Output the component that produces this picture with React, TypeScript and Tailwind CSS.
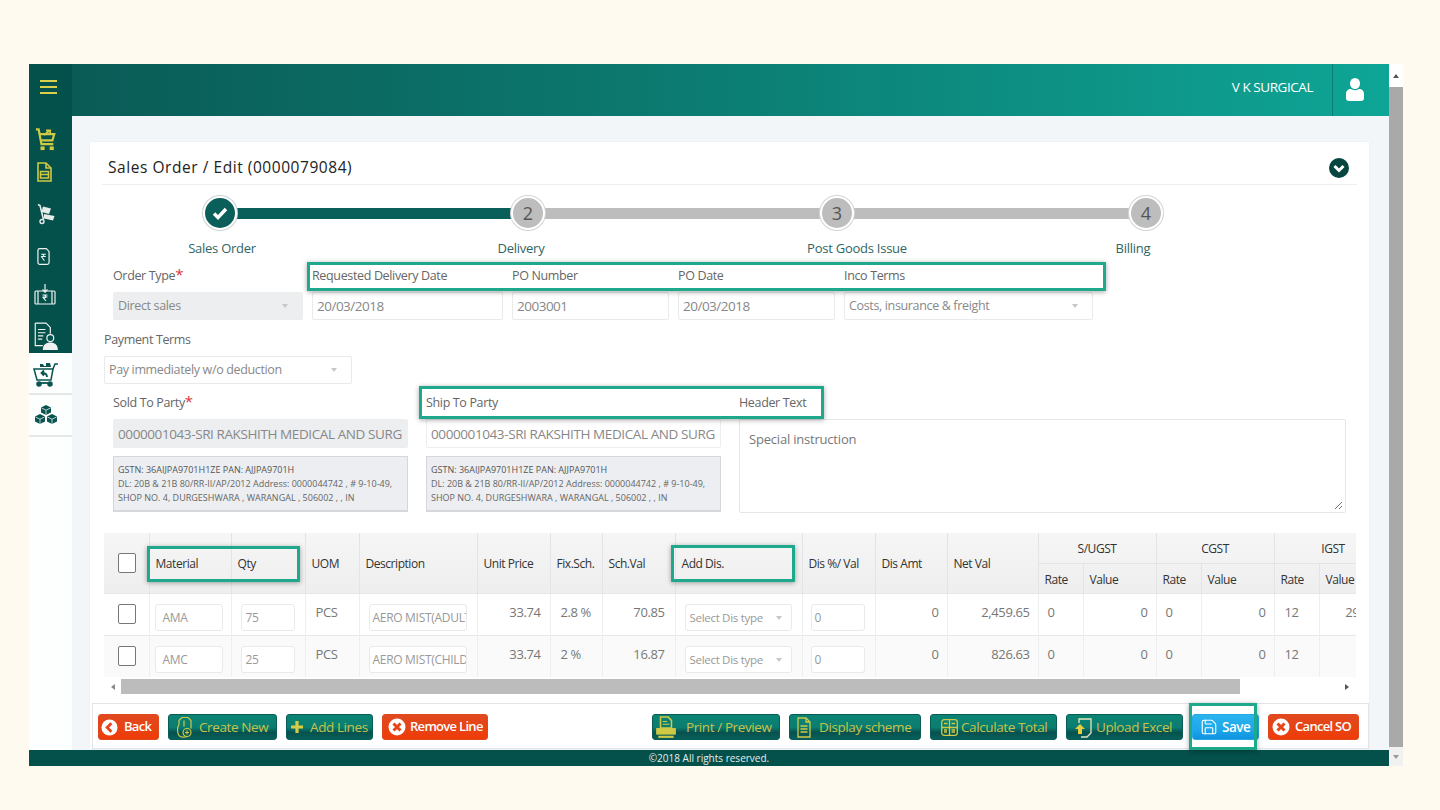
import { Save } from "lucide-react";
import type { ReactNode } from "react";

const YELLOW = "#cfc944";
const DARK = "#0a544f";

function Caret({ className = "" }: { className?: string }) {
  return <span className={`ml-auto h-0 w-0 border-x-[3px] border-t-[4px] border-x-transparent border-t-[#c4c8cc] ${className}`} />;
}

function Star() {
  return <span className="text-[#e0323c] text-[15px] leading-none">*</span>;
}

function Highlight({ className }: { className: string }) {
  return <div className={`absolute z-10 border-[3px] border-[#1fa98c] shadow-[0_1px_5px_rgba(0,0,0,0.35)] pointer-events-none ${className}`} />;
}

function Field({ label, value, width, disabled, select }: { label: ReactNode; value: string; width: string; disabled?: boolean; select?: boolean }) {
  return (
    <div className={`flex flex-col ${width}`}>
      <div className="h-5 pt-px leading-5 text-[12.5px] tracking-[-0.35px] text-[#666]">{label}</div>
      <div className={`mt-[7px] h-7 flex items-center rounded-[2px] border pl-[4px] pr-[5px] text-[#888] ${select ? "text-[12.5px] tracking-[-0.35px]" : "text-[13.5px] tracking-[-0.5px]"} ${disabled ? "bg-[#eceef0] border-[#eceef0]" : "bg-white border-[#e8eaec]"}`}>
        <span className="whitespace-nowrap">{value}</span>
        {select && <Caret className="mr-[9px]" />}
      </div>
    </div>
  );
}

function Address() {
  return (
    <div className="mt-[8px] h-14 w-[295px] bg-[#eceef1] border border-[#d5d7da] border-b-2 px-[4px] pt-[6px] text-[9px] leading-[14px] text-[#666] whitespace-nowrap">
      <div className="text-[#555] font-medium">GSTN: 36AIJPA9701H1ZE PAN: AJJPA9701H</div>
      <div>DL: 20B &amp; 21B 80/RR-II/AP/2012 Address: 0000044742 , # 9-10-49,</div>
      <div>SHOP NO. 4, DURGESHWARA , WARANGAL , 506002 , , IN</div>
    </div>
  );
}

function Step({ n, done }: { n: number; done?: boolean }) {
  return (
    <div className={`z-[1] h-[34px] w-[34px] shrink-0 rounded-full border-2 border-white ring-1 flex items-center justify-center text-[18px] text-[#555] ${done ? "bg-[#0a5f5a] ring-[#c8d4d4]" : "bg-[#bdbdbd] ring-[#d4d4d4]"}`}>
      {done ? (
        <svg width="16" height="14" viewBox="0 0 16 14"><path d="M2 7.5 6 11.5 14 3" fill="none" stroke="#fff" strokeWidth="3.4" /></svg>
      ) : n}
    </div>
  );
}

function Btn({ children, w, kind, icon, place }: { children: string; w: string; kind: "green" | "red" | "blue"; icon?: ReactNode; place: string }) {
  const look = {
    green: "bg-[linear-gradient(#0b8474,#0b7d70_52%,#07514e_72%,#07605b)] text-[#c7c24a] border-[#0a5a55] font-medium text-[13.5px] tracking-[-0.4px]",
    red: "bg-[linear-gradient(#e0491f,#e84212_60%,#ee3c08)] text-white border-[#e0491f] font-semibold text-[13px] tracking-[-0.7px]",
    blue: "bg-[linear-gradient(#2cb4ee,#1da7ea_60%,#0f93e0)] text-white border-[#23a9ea] font-semibold text-[13.5px] tracking-[-0.5px]",
  }[kind];
  return (
    <div className={`h-[26px] ${w} ${place} shrink-0 flex items-center rounded-[3px] border whitespace-nowrap ${look}`}>
      {icon}
      <span>{children}</span>
    </div>
  );
}

function Back() {
  return (
    <svg width="17" height="17" viewBox="0 0 18 18"><circle cx="9" cy="9" r="8.5" fill="#fff" /><path d="M11 4.5 6.5 9l4.5 4.5" fill="none" stroke="#e8441a" strokeWidth="3" /></svg>
  );
}
function Cancel() {
  return (
    <svg width="18" height="18" viewBox="0 0 18 18"><circle cx="9" cy="9" r="8.5" fill="#fff" /><path d="M5.5 5.5l7 7m0-7-7 7" stroke="#e8441a" strokeWidth="3" /></svg>
  );
}
function CreateIcon() {
  return (
    <svg width="17" height="23" viewBox="0 0 17 22" fill="none" stroke={YELLOW} strokeWidth="1.2"><path d="M6 1h6l3 3v8M6 1 3 4v4M3 8c-2 3-2 8 0 11 1 2 6 2 8 1" /><circle cx="11" cy="16" r="4" /><path d="M11 14v4M9 16h4M8 4v6" /></svg>
  );
}
function PlusIcon() {
  return (
    <svg width="12" height="12" viewBox="0 0 12 12"><path d="M6 0v12M0 6h12" stroke="#d6cc45" strokeWidth="3.2" /></svg>
  );
}
function PrintIcon() {
  return (
    <svg width="22" height="23" viewBox="0 0 20 21"><path d="M5 1h7l3 3v7H5z" fill="none" stroke={YELLOW} strokeWidth="1.4" /><path d="M7 5h4M7 7.5h6" stroke={YELLOW} /><path d="M1 11h18v6H1z" fill={YELLOW} /><path d="M3 18h14v2H3z" fill={YELLOW} /></svg>
  );
}
function DocIcon() {
  return (
    <svg width="14" height="21" viewBox="0 0 14 21" fill="none" stroke={YELLOW} strokeWidth="1.3"><path d="M1 1h8l4 4v15H1z" /><path d="M9 1v4h4" /><path d="M3.5 9h7M3.5 12h7M3.5 15h7" strokeWidth="1.6" /></svg>
  );
}
function CalcIcon() {
  return (
    <svg width="17" height="17" viewBox="0 0 17 17" fill="none" stroke={YELLOW} strokeWidth="1.3"><rect x="0.7" y="0.7" width="15.6" height="15.6" rx="2.5" /><path d="M8.5 1v15M1 8.5h15" /><path d="M3 4.5h3.5M10.5 4.5h3.500M3 11h3M3 13h3M10.500 11h3.500M10.500 13h3.500" /></svg>
  );
}
function UploadIcon() {
  return (
    <svg width="18" height="21" viewBox="0 0 18 21"><path d="M5 6V2h12v14l-4 4H7" fill="none" stroke="#e8e6c0" strokeWidth="1.3" /><path d="M6 7l5 5H8v5H4v-5H1z" fill="#e6cf3e" /></svg>
  );
}

function CartIcon() {
  return (
    <svg width="22" height="24" viewBox="0 0 24 25" fill="none" stroke={YELLOW} strokeWidth="2.4"><path d="M1 1h3l3 16h13" /><path d="M5 6h16l-2 7H7" /><path d="M10 7 16 2m-4 0h4.500v4" strokeWidth="2" /><rect x="6" y="19.500" width="4.500" height="4" fill={YELLOW} stroke="none" /><rect x="16" y="19.500" width="4.500" height="4" fill={YELLOW} stroke="none" /></svg>
  );
}
function NoteIcon() {
  return (
    <svg width="15" height="20" viewBox="0 0 15 20" fill="none" stroke={YELLOW} strokeWidth="1.6"><path d="M1 1h8l5 5v13H1z" /><path d="M9 1v5h5" /><path d="M3.500 9.500h8v6.500h-8zM3.500 12.500h8" /></svg>
  );
}
function TruckIcon() {
  return (
    <svg width="18" height="22" viewBox="0 0 18 21" fill="none"><path d="M1 1l2 1L6.500 16" stroke="#e6ecea" strokeWidth="1.600" /><circle cx="5" cy="18" r="2" stroke="#e6ecea" strokeWidth="1.400" /><path d="M6 3l8 2-2 5.500-7.500-2z" fill="#e6ecea" /><path d="M7 10.500l10.500 2-1.500 4.500-9-2z" fill="#e6ecea" /></svg>
  );
}
function RupeeDoc() {
  return (
    <svg width="13" height="19" viewBox="0 0 14 19" fill="none" stroke="#eef3f2" strokeWidth="1.300"><path d="M3 1h7l3 3v12a2 2 0 0 1-2 2H3a2 2 0 0 1-2-2V3a2 2 0 0 1 2-2z" /><path d="M4.500 7h5M4.500 9.500h5M5 7c3 0 3 3 0 3l3 4" strokeWidth="1.100" /></svg>
  );
}
function RupeeNote() {
  return (
    <svg width="22" height="21" viewBox="0 0 22 21" fill="none" stroke="#eef3f2" strokeWidth="1.200"><rect x="1" y="7" width="20" height="13" rx="1" /><path d="M11 0v9M8.500 5.500 11 8l2.500-2.500" /><path d="M4 7v13M18 7v13" /><path d="M8.500 11h5M8.500 13h5M9.500 11c3 0 3 3 0 3l2.500 3" strokeWidth="1.100" /></svg>
  );
}
function ReportIcon() {
  return (
    <svg width="26" height="29" viewBox="0 0 24 27" fill="none" stroke="#eef3f2" strokeWidth="1.100"><path d="M2 1h10l4 4v6M2 1v21h7" /><path d="M4.500 7h7M4.500 10h7M4.500 13h5M4.500 16h4" /><circle cx="16" cy="15" r="3.200" stroke="#eef3f2" /><path d="M9 26c0-5 3-7 7-7s7 2 7 7z" fill="#eef3f2" stroke="none" /></svg>
  );
}
function CartDark() {
  return (
    <svg width="26" height="25" viewBox="0 0 26 25" fill="none" stroke={DARK} strokeWidth="1.500"><path d="M1 7h19l-2 11H4z" /><path d="M20 7l2-5h3" /><path d="M4 21h15" strokeWidth="1.800" /><circle cx="6" cy="22" r="2" fill={DARK} /><circle cx="17" cy="22" r="2" fill={DARK} /><path d="M4 5h3V2h3l1 2h2V1h4l1 4H4z" fill={DARK} stroke="none" /><path d="M14 15c0-3-2-4-5-4m2-2.500L8.500 11l2.500 2.500" strokeWidth="1.800" /></svg>
  );
}
function Cubes() {
  return (
    <svg width="24" height="22" viewBox="0 0 24 20" fill={DARK}><path d="M12 0l5 2.500v5L12 10 7 7.500v-5z" /><path d="M6 9l5 2.500v5L6 19l-5-2.500v-5z" /><path d="M18 9l5 2.500v5L18 19l-5-2.500v-5z" /><path d="M7.500 3 12 5.200 16.500 3M12 5.200V10M1.500 12 6 14.200 10.500 12M6 14.200V19M13.500 12 18 14.200 22.500 12M18 14.200V19" stroke="#fff" strokeWidth="0.700" fill="none" /></svg>
  );
}

function Sidebar() {
  return (
    <div className="w-[43px] shrink-0 flex flex-col bg-[#fdfefe]">
      <div className="h-[289px] bg-[#04504b] pr-[10px] flex flex-col items-center">
        <div className="h-[52px] ml-[5px] flex flex-col justify-center gap-[4px] pb-[6px]">
          <div className="h-[2px] w-[17px] bg-[#d8cf4a]" />
          <div className="h-[2px] w-[17px] bg-[#d8cf4a]" />
          <div className="h-[2px] w-[17px] bg-[#d8cf4a]" />
        </div>
        <div className="mt-[12px] h-[24px]"><CartIcon /></div>
        <div className="mt-[10px] h-5 -ml-[3px]"><NoteIcon /></div>
        <div className="mt-[21px] h-[22px]"><TruckIcon /></div>
        <div className="mt-[22px] h-[19px] -ml-[5px]"><RupeeDoc /></div>
        <div className="mt-[18px] h-[21px] -ml-[2px]"><RupeeNote /></div>
        <div className="mt-[17px] h-[29px]"><ReportIcon /></div>
      </div>
      <div className="h-[42px] pr-[10px] border-b-2 border-[#e4e6e8] flex items-center justify-center pt-[2px]"><CartDark /></div>
      <div className="h-[42px] pr-[10px] border-b-2 border-[#e4e6e8] flex items-center justify-center"><Cubes /></div>
    </div>
  );
}

const th = "border-r border-[#e2e4e6] font-medium text-[12px] tracking-[-0.45px] text-[#333] px-[6px]";
const td = "border-r border-[#eceef0] align-top text-[13px] tracking-[-0.4px] text-[#777] px-[6px] pt-[9px]";
const num = "text-right pr-[9px]";

const rows = [
  { code: "AMA", qty: "75", desc: "AERO MIST(ADULT", fix: "2.8 %", sch: "70.85", net: "2,459.65", igst: "295.16", bg: "bg-white" },
  { code: "AMC", qty: "25", desc: "AERO MIST(CHILD", fix: "2 %", sch: "16.87", net: "826.63", igst: "", bg: "bg-[#fafafa]" },
];

function CellInput({ value, width }: { value: string; width: string }) {
  return (
    <div className={`h-[27px] ${width} mt-px pt-px bg-white border border-[#e8eaec] rounded-[3px] flex items-center text-[12px] tracking-[-0.3px] text-[#999] whitespace-nowrap overflow-hidden`}>
      {value}
    </div>
  );
}

function Box() {
  return <div className="h-5 w-[18px] border border-[#777] rounded-[2px] bg-white" />;
}

const colClasses = ["w-[45px]", "w-[82px]", "w-[74px]", "w-[54px]", "w-[118px]", "w-[73px]", "w-[52px]", "w-[73px]", "w-[127px]", "w-[73px]", "w-[72px]", "w-[91px]", "w-[45px]", "w-[73px]", "w-[45px]", "w-[73px]", "w-[45px]", "w-[73px]"];

function OrderTable() {
  return (
    <div className="relative ml-[14px] mt-5 w-[1252px]">
      <div className="overflow-hidden">
        <table className="table-fixed w-[1288px] border-collapse">
          <colgroup>
            {colClasses.map((c, i) => <col key={i} className={c} />)}
          </colgroup>
          <thead className="bg-[linear-gradient(#f6f6f6,#eeeeee)]">
            <tr className="h-[30px]">
              <th rowSpan={2} className={`${th} pl-[14px]`}><Box /></th>
              {["Material", "Qty", "UOM", "Description", "Unit Price", "Fix.Sch.", "Sch.Val", "Add Dis.", "Dis %/ Val", "Dis Amt", "Net Val"].map((h) => (
                <th key={h} rowSpan={2} className={`${th} text-left pt-[3px]`}>{h}</th>
              ))}
              {["S/UGST", "CGST", "IGST"].map((h) => (
                <th key={h} colSpan={2} className={`${th} text-center border-b pt-[3px]`}>{h}</th>
              ))}
            </tr>
            <tr className="h-[30px]">
              {["Rate", "Value", "Rate", "Value", "Rate", "Value"].map((h, i) => <th key={i} className={`${th} text-left pt-[3px]`}>{h}</th>)}
            </tr>
          </thead>
          <tbody>
            {rows.map((r) => (
              <tr key={r.code} className={`h-[42px] border-t border-[#e6e8ea] ${r.bg}`}>
                <td className={`${td} pl-[14px] pt-[10px]`}><Box /></td>
                <td className={`${td} pl-[5px]`}><CellInput value={r.code} width="w-[68px] pl-[7px]" /></td>
                <td className={`${td} pl-[9px]`}><CellInput value={r.qty} width="w-[54px] pl-[4px]" /></td>
                <td className={`${td} pl-[10px]`}>PCS</td>
                <td className={`${td} pl-[9px] pr-0`}><CellInput value={r.desc} width="w-[98px] pl-[3px]" /></td>
                <td className={`${td} ${num}`}>33.74</td>
                <td className={`${td} pl-[10px] pr-0`}>{r.fix}</td>
                <td className={`${td} text-right pr-[10px]`}>{r.sch}</td>
                <td className={`${td} pl-[9px]`}>
                  <div className="h-[27px] w-[107px] mt-px pt-px bg-white border border-[#e8eaec] rounded-[3px] flex items-center pl-[4px] text-[11.5px] tracking-[-0.3px] text-[#999] whitespace-nowrap">
                    Select Dis type<Caret className="mr-[9px]" />
                  </div>
                </td>
                <td className={`${td} pl-[8px]`}><CellInput value="0" width="w-[54px] pl-[3px]" /></td>
                <td className={`${td} text-right pr-[8px]`}>0</td>
                <td className={`${td} text-right pr-[8px]`}>{r.net}</td>
                <td className={`${td} pl-[9px]`}>0</td>
                <td className={`${td} text-right pr-[8px]`}>0</td>
                <td className={`${td} pl-[9px]`}>0</td>
                <td className={`${td} text-right pr-[8px]`}>0</td>
                <td className={`${td} pl-[10px]`}>12</td>
                <td className={`${td} text-right pr-[8px]`}>{r.igst}</td>
              </tr>
            ))}
          </tbody>
        </table>
      </div>
      <Highlight className="left-[43px] top-[13px] w-[153px] h-[36px]" />
      <Highlight className="left-[567px] top-[12px] w-[124px] h-[37px]" />
      <div className="mt-[2px] h-[15px] flex items-center">
        <span className="ml-[7px] w-0 h-0 border-y-[3px] border-r-[4px] border-y-transparent border-r-[#888]" />
        <div className="ml-[6px] h-[15px] w-[1119px] bg-[#bcbcbc]" />
        <span className="ml-auto mr-[7px] w-0 h-0 border-y-[3px] border-l-[4px] border-y-transparent border-l-[#555]" />
      </div>
    </div>
  );
}

function ActionBar() {
  return (
    <div className="mt-[9px] ml-[2px] h-[46px] flex items-center border border-[#e2e4e6] bg-white pl-[5px] pr-[9px] pt-[2px]">
      <div className="flex gap-[9px]">
        <Btn w="w-[61px]" place="pl-[2px] gap-[6px]" kind="red" icon={<Back />}>Back</Btn>
        <Btn w="w-[109px]" place="pl-[7px] gap-[6px]" kind="green" icon={<CreateIcon />}>Create New</Btn>
        <Btn w="w-[87px]" place="pl-[4px] gap-[7px]" kind="green" icon={<PlusIcon />}>Add Lines</Btn>
        <Btn w="w-[106px]" place="pl-[5px] gap-[4px]" kind="red" icon={<Cancel />}>Remove Line</Btn>
      </div>
      <div className="ml-auto flex gap-[9px]">
        <Btn w="w-[128px]" place="pl-[2px] gap-[9px]" kind="green" icon={<PrintIcon />}>Print / Preview</Btn>
        <Btn w="w-[132px]" place="pl-[7px] gap-[8px]" kind="green" icon={<DocIcon />}>Display scheme</Btn>
        <Btn w="w-[127px]" place="pl-[10px] gap-[3px]" kind="green" icon={<CalcIcon />}>Calculate Total</Btn>
        <Btn w="w-[117px]" place="pl-[7px] gap-[4px]" kind="green" icon={<UploadIcon />}>Upload Excel</Btn>
        <div className="relative">
          <Btn w="w-[67px]" place="pl-[7px] gap-[4px]" kind="blue" icon={<Save size={18} strokeWidth={1.5} />}>Save</Btn>
          <Highlight className="-left-[3px] -top-[11px] w-[68px] h-[47px]" />
        </div>
        <Btn w="w-[91px]" place="pl-[3px] gap-[5px]" kind="red" icon={<Cancel />}>Cancel SO</Btn>
      </div>
    </div>
  );
}

export default function App() {
  return (
    <div className="h-[810px] overflow-hidden bg-[#fffaf0] pt-16 pl-[29px] font-['Open_Sans',sans-serif]">
      <div className="flex h-[702px] w-[1374px]">
        <div className="flex w-[1360px] flex-col">
          <div className="flex flex-1 min-h-0">
            <Sidebar />
            <div className="flex flex-1 flex-col min-w-0">
              <header className="h-[52px] flex justify-end bg-[linear-gradient(90deg,#0a5b56,#0c7a70_45%,#0ea596)]">
                <div className="flex items-center pr-[19px] pb-[6px] text-[13.5px] tracking-[-0.45px] text-white">V K SURGICAL</div>
                <div className="w-[57px] pr-[12px] border-l border-[#0a7d72] flex items-center justify-center pb-[2px]">
                  <svg width="18" height="23" viewBox="0 0 18 23" fill="#fff"><ellipse cx="9" cy="5.500" rx="5" ry="5.500" /><path d="M0 20v-4c0-3 2-5 5-5 2 1.500 6 1.500 8 0 3 0 5 2 5 5v4c0 2-1 3-3 3H3c-2 0-3-1-3-3z" /></svg>
                </div>
              </header>
              <main className="flex-1 min-h-0 bg-[#f2f6f9] pl-[18px] pr-5 pt-[26px]">
                <section className="h-[607px] bg-white shadow-[0_0_2px_rgba(0,0,0,0.05)]">
                  <div className="mx-3 h-[43px] flex items-center justify-between border-b border-[#eceef0] pl-[6px] pr-[8px]">
                    <h1 className="mt-[10px] text-[15.5px] tracking-[0.55px] text-[#222]">Sales Order / Edit (0000079084)</h1>
                    <svg className="mt-[10px]" width="20" height="20" viewBox="0 0 20 20"><circle cx="10" cy="10" r="10" fill="#07463f" /><path d="M5.500 8 10 12.500 14.500 8" fill="none" stroke="#fff" strokeWidth="3" /></svg>
                  </div>
                  <div className="mt-[11px] ml-[113px] flex items-center w-[976px]">
                    <Step n={1} done />
                    <div className="-mx-px h-[11px] w-[276px] bg-[#0a5f5a]" />
                    <Step n={2} />
                    <div className="-mx-px h-[11px] w-[277px] bg-[#bdbdbd]" />
                    <Step n={3} />
                    <div className="-mx-px h-[11px] w-[277px] bg-[#bdbdbd]" />
                    <Step n={4} />
                  </div>
                  <div className="mt-[8px] ml-[72px] flex text-[13px] tracking-[-0.25px] leading-5 text-[#2f6663] text-center">
                    <div className="w-[120px]">Sales Order</div>
                    <div className="ml-[179px] w-[120px]">Delivery</div>
                    <div className="ml-[206px] w-[140px]">Post Goods Issue</div>
                    <div className="ml-[166px] w-[80px]">Billing</div>
                  </div>
                  <div className="relative mt-[7px] pl-[23px] flex gap-[9px]">
                    <Field label={<>Order Type<Star /></>} value="Direct sales" width="w-[190px]" disabled select />
                    <Field label="Requested Delivery Date" value="20/03/2018" width="w-[191px]" />
                    <Field label="PO Number" value="2003001" width="w-[157px]" />
                    <Field label="PO Date" value="20/03/2018" width="w-[157px]" />
                    <Field label="Inco Terms" value="Costs, insurance & freight" width="w-[249px]" select />
                    <Highlight className="left-[217px] -top-[3px] w-[799px] h-[29px]" />
                  </div>
                  <div className="mt-[9px] ml-[14px] w-[248px]">
                    <Field label="Payment Terms" value="Pay immediately w/o deduction" width="w-[248px]" select />
                  </div>
                  <div className="relative mt-[8px] pl-[23px] flex">
                    <div className="w-[295px]">
                      <div className="h-5 pt-px leading-5 text-[12.5px] tracking-[-0.35px] text-[#666]">Sold To Party<Star /></div>
                      <div className="mt-[7px] h-[29px] flex items-center rounded-[2px] bg-[#eceef0] px-[5px] pt-px text-[13.5px] tracking-[-0.4px] text-[#888] whitespace-nowrap overflow-hidden">0000001043-SRI RAKSHITH MEDICAL AND SURG</div>
                      <Address />
                    </div>
                    <div className="ml-[18px] w-[295px]">
                      <div className="h-5 pt-px leading-5 text-[12.5px] tracking-[-0.35px] text-[#666]">Ship To Party</div>
                      <div className="mt-[7px] h-[29px] flex items-center rounded-[2px] bg-white border border-[#eceef0] pl-[4px] pt-px text-[13.5px] tracking-[-0.4px] text-[#888] whitespace-nowrap overflow-hidden">0000001043-SRI RAKSHITH MEDICAL AND SURG</div>
                      <Address />
                    </div>
                    <div className="ml-[18px] w-[607px]">
                      <div className="h-5 pt-px leading-5 text-[12.5px] tracking-[-0.35px] text-[#666]">Header Text</div>
                      <div className="relative mt-[7px] h-[94px] rounded-[2px] bg-white border border-[#e4e6e8] px-[9px] pt-[10px] text-[13px] tracking-[-0.2px] text-[#777]">
                        Special instruction
                        <svg className="absolute right-[2px] bottom-[2px]" width="9" height="9" viewBox="0 0 9 9"><path d="M1 8 8 1M5 8l3-3" stroke="#777" /></svg>
                      </div>
                    </div>
                    <Highlight className="left-[329px] -top-[6px] w-[405px] h-[33px]" />
                  </div>
                  <OrderTable />
                  <ActionBar />
                </section>
              </main>
            </div>
          </div>
          <footer className="h-4 bg-[#04504b] text-center text-[10px] leading-4 text-[#e8eeee] font-medium">©2018 All rights reserved.</footer>
        </div>
        <div className="w-[14px] flex flex-col items-center bg-[#f1f1f1]">
          <div className="h-[23px] w-full flex items-center justify-center bg-white"><span className="h-0 w-0 border-x-[3px] border-b-[4px] border-x-transparent border-b-[#555]" /></div>
          <div className="h-[660px] w-full bg-[#a9a9a9]" />
          <div className="flex-1 flex items-center justify-center"><span className="h-0 w-0 border-x-[3px] border-t-[4px] border-x-transparent border-t-[#999]" /></div>
        </div>
      </div>
    </div>
  );
}
